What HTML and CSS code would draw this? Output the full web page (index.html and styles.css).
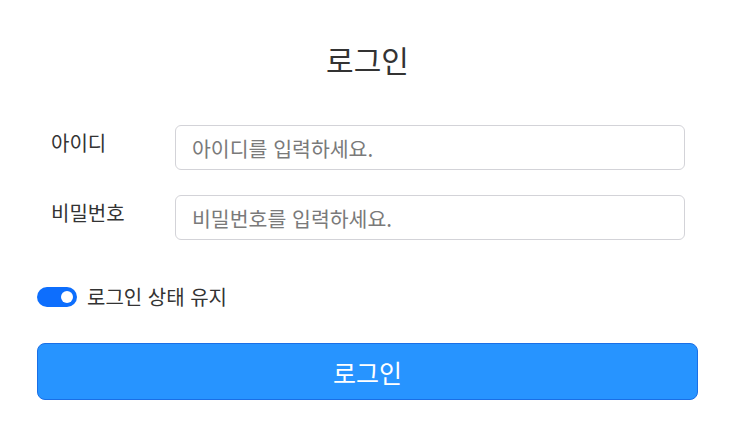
FILE: index.html
```html
<!DOCTYPE html>
<html lang="ko">
<head>
<meta charset="utf-8">
<title>로그인</title>
<link rel="stylesheet" href="styles.css">
</head>
<body>
<main class="page">
  <h1 class="title">로그인</h1>
  <form class="form">
    <div class="row">
      <label class="label" for="uid">아이디</label>
      <input class="input" id="uid" type="text" placeholder="아이디를 입력하세요.">
    </div>
    <div class="row">
      <label class="label" for="pw">비밀번호</label>
      <input class="input" id="pw" type="password" placeholder="비밀번호를 입력하세요.">
    </div>
    <label class="keep">
      <span class="switch"><span class="knob"></span></span>
      <span class="keep-text">로그인 상태 유지</span>
    </label>
    <button class="btn" type="button">로그인</button>
  </form>
</main>
</body>
</html>
```
FILE: styles.css
```css
* { box-sizing: border-box; }
html, body { margin: 0; padding: 0; background: #fff; }
body {
  font-family: "Noto Sans CJK KR", "Noto Sans", sans-serif;
  color: #333;
}
.page {
  width: 661px;
  margin-left: 37px;
  padding-top: 38px;
}
.title {
  margin: 0;
  text-align: center;
  font-size: 30px;
  font-weight: 400;
  line-height: 42px;
  color: #333;
}
.form {
  display: flex;
  flex-direction: column;
  margin-top: 45px;
}
.row {
  display: flex;
  align-items: flex-start;
  padding: 0 13px 0 14px;
  margin-bottom: 25px;
}
.label {
  width: 124px;
  flex: none;
  font-size: 20px;
  line-height: 28px;
  padding-top: 4px;
  color: #333;
}
.input {
  flex: 1;
  height: 45px;
  border: 1px solid #d3d3d8;
  border-radius: 6px;
  padding: 0 16px;
  font-family: inherit;
  font-size: 20.5px;
  color: #333;
  outline: none;
}
.input::placeholder { color: #7a7a7a; }
.keep {
  display: flex;
  align-items: center;
  gap: 10px;
  margin-top: 20px;
  height: 24px;
}
.switch {
  position: relative;
  width: 40px;
  height: 20px;
  border-radius: 10px;
  background: #0d6efd;
  flex: none;
}
.knob {
  position: absolute;
  right: 4px;
  top: 4px;
  width: 12px;
  height: 12px;
  border-radius: 50%;
  background: #fff;
}
.keep-text {
  font-size: 20px;
  line-height: 24px;
  color: #333;
}
.btn {
  margin-top: 34px;
  height: 57px;
  width: 100%;
  border: 1px solid #1a6fe6;
  border-radius: 8px;
  background: #2794ff;
  color: #fff;
  font-family: inherit;
  font-size: 25px;
  cursor: pointer;
}
```
